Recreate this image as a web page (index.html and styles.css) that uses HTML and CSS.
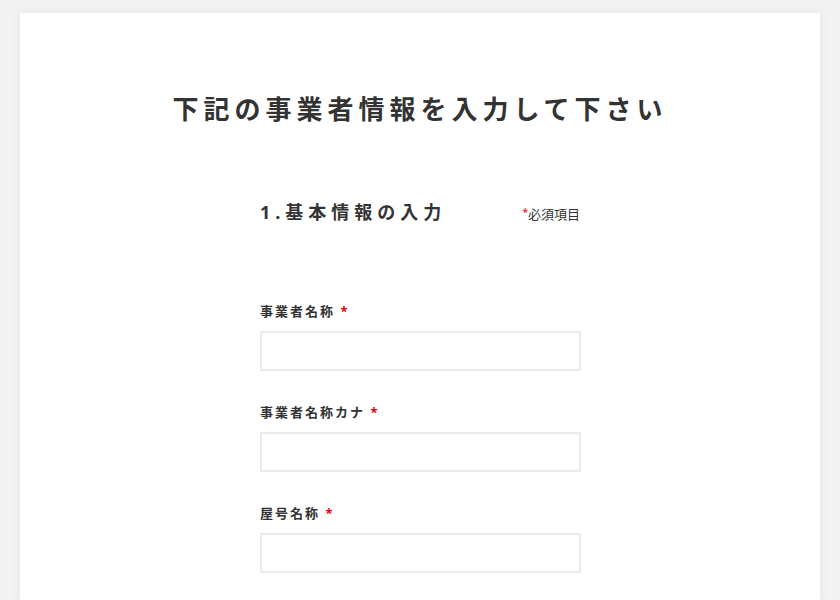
FILE: index.html
```html
<!DOCTYPE html>
<html lang="ja">
<head>
    <meta charset="UTF-8">
    <meta name="viewport" content="width=device-width, initial-scale=1.0">
    <title>事業者情報の入力</title>
    <link rel="stylesheet" href="styles.css">
</head>
<body>
    <div class="container">
        <h1>下記の事業者情報を入力して下さい</h1>
        <div class="form-wrap">
            <div class="section-head">
                <h2>1.基本情報の入力</h2>
                <span class="required-note"><span class="req">*</span>必須項目</span>
            </div>
            <div class="form-group">
                <label for="name">事業者名称 <span class="req">*</span></label>
                <input type="text" id="name">
            </div>
            <div class="form-group">
                <label for="kana">事業者名称カナ <span class="req">*</span></label>
                <input type="text" id="kana">
            </div>
            <div class="form-group">
                <label for="trade">屋号名称 <span class="req">*</span></label>
                <input type="text" id="trade">
            </div>
        </div>
    </div>
</body>
</html>
```

FILE: styles.css
```css
body {
    font-family: "Noto Sans", "Noto Sans CJK JP", sans-serif;
    margin: 0;
    padding: 13px 20px 0;
    background-color: #f3f3f3;
    color: #333;
    overflow: hidden;
}
.container {
    box-sizing: border-box;
    background-color: white;
    min-height: calc(100vh - 13px);
    padding-top: 77px;
    box-shadow: 0 0 10px rgba(0,0,0,0.07);
}
h1 {
    margin: 0;
    font-size: 26px;
    line-height: 39px;
    font-weight: bold;
    letter-spacing: 5px;
    text-align: center;
}
.form-wrap {
    width: 320px;
    margin: 70px auto 0;
}
.section-head {
    display: flex;
    justify-content: space-between;
    align-items: center;
    margin-bottom: 75px;
}
h2 {
    margin: 0;
    font-size: 18px;
    line-height: 27px;
    font-weight: bold;
    letter-spacing: 5px;
}
.required-note {
    font-size: 13px;
    line-height: 20px;
}
.req {
    color: #e60012;
}
.required-note .req {
    font-size: 10px;
    vertical-align: 3px;
}
.form-group {
    margin-bottom: 31px;
}
label {
    display: block;
    font-size: 13px;
    line-height: 20px;
    font-weight: bold;
    letter-spacing: 2px;
    margin-bottom: 10px;
}
input {
    display: block;
    box-sizing: border-box;
    width: 321px;
    height: 40px;
    border: 2px solid #ebebeb;
    border-radius: 1px;
    padding: 0 10px;
    font-size: 14px;
    outline: none;
}
```
